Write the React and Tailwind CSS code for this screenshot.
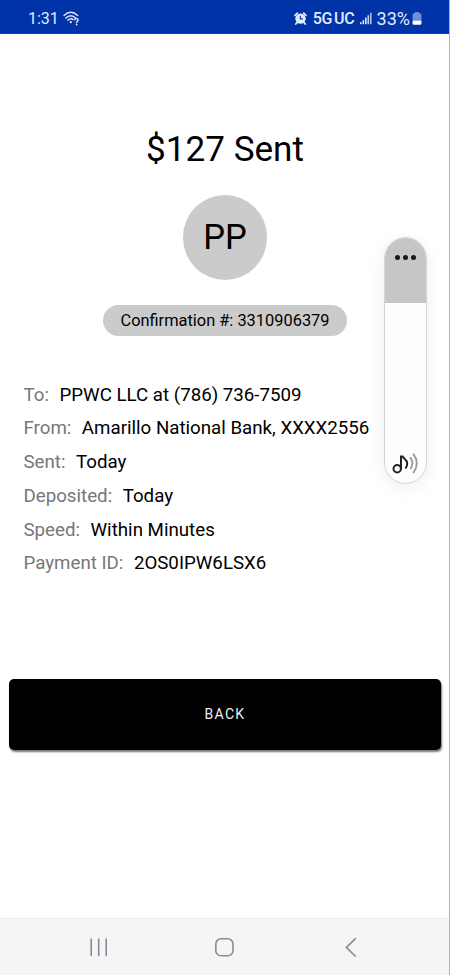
import React from 'react'

const details = [
  { label: 'To:', value: 'PPWC LLC at (786) 736-7509' },
  { label: 'From:', value: 'Amarillo National Bank, XXXX2556' },
  { label: 'Sent:', value: 'Today' },
  { label: 'Deposited:', value: 'Today' },
  { label: 'Speed:', value: 'Within Minutes' },
  { label: 'Payment ID:', value: '2OS0IPW6LSX6' },
]

const WifiIcon = () => (
  <svg width="17" height="15" viewBox="0 0 17 15" fill="none" stroke="currentColor" strokeWidth="1.4" strokeLinecap="round">
    <path d="M1 4.4Q7.8 -1.8 14.6 4.4" />
    <path d="M2.9 7Q7.8 2.4 12.7 7" />
    <path d="M4.9 9.3Q7.8 6.8 10 8.6" />
    <circle cx="7.8" cy="11.2" r="1.1" fill="currentColor" stroke="none" />
    <path d="M11.8 8.7C11.8 7.2 15.2 7.2 15.2 9C15.2 10.2 13.6 10.2 13.6 11.4" />
    <circle cx="13.6" cy="13.5" r="0.9" fill="currentColor" stroke="none" />
  </svg>
)

const AlarmIcon = () => (
  <svg width="13" height="13" viewBox="0 0 13 13" fill="none">
    <circle cx="6.5" cy="6.6" r="5.2" fill="currentColor" />
    <path d="M1.1 3.3L3.3 1.2M11.9 3.3L9.7 1.2M3 10.5L1.8 12M10 10.5L11.2 12" stroke="currentColor" strokeWidth="1.8" strokeLinecap="round" />
    <path d="M6.3 3.8V6.9H8.8" stroke="#0033a8" strokeWidth="1.1" />
  </svg>
)

const SignalIcon = () => (
  <svg width="12" height="13" viewBox="0 0 12 13" fill="currentColor">
    <rect x="0" y="10.2" width="1.5" height="2" />
    <rect x="2.5" y="8.2" width="1.6" height="4" />
    <rect x="5" y="5.6" width="1.6" height="6.6" />
    <rect x="7.5" y="3.2" width="1.6" height="9" opacity="0.85" />
    <rect x="10" y="0.8" width="1.6" height="11.4" opacity="0.75" />
  </svg>
)

const BatteryIcon = () => (
  <svg width="10" height="13" viewBox="0 0 10 13">
    <path d="M3 0H7V1.3H8Q9.4 1.3 9.4 2.8V9H0.6V2.8Q0.6 1.3 2 1.3H3Z" fill="#6f8fd8" />
    <path d="M0.6 8.8H9.4V11.4Q9.4 12.8 8 12.8H2Q0.6 12.8 0.6 11.4Z" fill="#fff" />
  </svg>
)

const SoundIcon = () => (
  <svg width="28" height="22" viewBox="0 0 28 22" fill="none" strokeLinecap="round">
    <circle cx="5.2" cy="15.7" r="3.7" stroke="#222" strokeWidth="2" />
    <path d="M9 15.7V3.4H10.6C11.4 5.8 15.2 6.2 15.2 10.4C15.2 12.4 14.7 13.6 13.8 14.8" stroke="#222" strokeWidth="2" />
    <path d="M18.4 4.6Q22.4 10 18.6 15.4" stroke="#999" strokeWidth="1.8" />
    <path d="M21.6 1.2Q28 10.2 21.6 19.4" stroke="#999" strokeWidth="1.8" />
  </svg>
)

const StatusBar = () => (
  <header className="flex h-[34px] items-center justify-between border-b border-[#1c3f9c] bg-[#0033a8] pt-[4px] pr-[27px] pl-[28px] text-[#e3ebff]">
    <div className="flex items-center gap-[4px]">
      <span className="text-[16px] leading-none">1:31</span>
      <WifiIcon />
    </div>
    <div className="flex items-center">
      <AlarmIcon />
      <span className="ml-[6px] text-[16px] leading-none font-medium tracking-[-0.2px] [word-spacing:-2px]">5G UC</span>
      <span className="ml-[5px]"><SignalIcon /></span>
      <span className="ml-[5px] text-[18px] leading-none">33%</span>
      <span className="ml-[2px]"><BatteryIcon /></span>
    </div>
  </header>
)

const VolumePanel = () => (
  <div className="absolute top-[237px] left-[384px] flex h-[247px] w-[43px] flex-col overflow-hidden rounded-full border border-[#d4d4d4] bg-[#fdfdfd] shadow-[0_4px_18px_rgba(0,0,0,0.07)]">
    <div className="flex h-[65px] justify-center gap-[3px] bg-[#c6c6c6] pt-[17px]">
      <span className="h-[5px] w-[5px] rounded-full bg-[#1a1a1a]" />
      <span className="h-[5px] w-[5px] rounded-full bg-[#1a1a1a]" />
      <span className="h-[5px] w-[5px] rounded-full bg-[#1a1a1a]" />
    </div>
    <div className="mt-auto mb-[8px] flex justify-center">
      <SoundIcon />
    </div>
  </div>
)

const NavigationBar = () => (
  <nav className="mt-auto flex h-[57px] items-center border-t border-[#efeff0] bg-[#f5f5f7] pl-[89px] text-[#8c8c90]">
    <svg width="20" height="20" viewBox="0 0 20 20" stroke="currentColor" strokeWidth="1.6" strokeLinecap="round">
      <path d="M2.2 2V18.6M9.7 2V18.6M17.2 2V18.6" />
    </svg>
    <svg className="ml-[105px]" width="20" height="20" viewBox="0 0 20 20" fill="none" stroke="currentColor" strokeWidth="1.6">
      <rect x="1.8" y="1.8" width="17.2" height="17" rx="5.2" />
    </svg>
    <svg className="ml-[110px]" width="14" height="20" viewBox="0 0 14 20" fill="none" stroke="currentColor" strokeWidth="1.6" strokeLinecap="round" strokeLinejoin="round">
      <path d="M11.4 1.7L2.4 10.4L11.4 19.2" />
    </svg>
  </nav>
)

const App = () => {
  return (
    <div className="relative flex h-[975px] w-[450px] flex-col overflow-hidden border-r border-[#b4b4b6] bg-white font-['Roboto',sans-serif] text-black">
      <StatusBar />

      <main className="flex flex-col">
        {/* Amount and recipient */}
        <section className="flex flex-col items-center pt-[94px] pl-px">
          <h1 className="text-[35.1px] leading-[42px]">$127 Sent</h1>
          <div className="mt-[25.4px] flex h-[84.4px] w-[84.4px] items-center justify-center rounded-full bg-[#cbcbcb] text-[34.5px] leading-none">
            PP
          </div>
          <p className="mt-[25.5px] flex h-[30.4px] w-[244px] items-center justify-center rounded-full bg-[#cbcbcb] pt-px text-[16.4px]">
            Confirmation #: 3310906379
          </p>
        </section>

        {/* Payment details */}
        <dl className="mt-[42px] flex flex-col pl-[23.5px] text-[18.72px]">
          {details.map((item) => (
            <div key={item.label} className="flex h-[33.75px] items-center gap-[10.5px]">
              <dt className="text-[#777]">{item.label}</dt>
              <dd>{item.value}</dd>
            </div>
          ))}
        </dl>

        <button className="mt-[98.8px] ml-[9px] h-[71px] w-[432px] rounded-[5px] bg-black text-[14px] tracking-[1.3px] text-[#eee] shadow-[1px_2px_2px_rgba(0,0,0,0.55)]">
          BACK
        </button>
      </main>

      <VolumePanel />
      <NavigationBar />
    </div>
  )
}

export default App
